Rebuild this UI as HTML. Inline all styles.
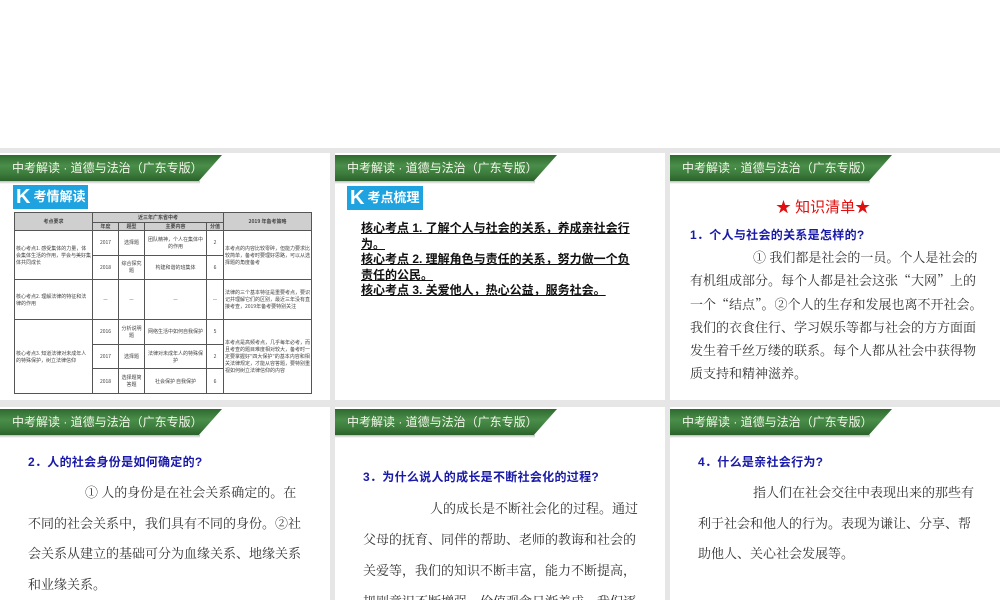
<!DOCTYPE html>
<html><head><meta charset="utf-8"><style>
*{margin:0;padding:0;box-sizing:border-box}
body{width:1000px;height:600px;position:relative;overflow:hidden;background:#fff;font-family:"Liberation Serif","Noto Serif CJK SC",serif}
.bg{position:absolute;left:0;top:148px;width:1000px;height:452px;background:#e6e6e6}
.s{position:absolute;background:#fff;overflow:hidden}
.hd{position:absolute;left:0;top:2px;width:222px;height:27px;background:linear-gradient(#2f6a2f,#4a8e4a 40%,#3b7b3b 70%,#2a5e2a);clip-path:polygon(0 0,222px 0,198px 27px,0 27px);color:#f2f6e8;font:12px "Liberation Sans","Noto Sans CJK SC",sans-serif;line-height:27px;padding-left:12px;letter-spacing:0}
.sh{position:absolute;left:0;top:28px;width:200px;height:3px;background:linear-gradient(#bbb,#fff)}
.q{position:absolute;color:#1a1aa8;font:bold 12px "Liberation Sans","Noto Sans CJK SC",sans-serif;letter-spacing:0.3px;white-space:nowrap}
.t{position:absolute;color:#333;font-size:13px;letter-spacing:0;white-space:nowrap}
.k{position:absolute;background:#1fa3e0;color:#fff;font:bold 13px "Liberation Sans","Noto Sans CJK SC",sans-serif;height:24px;line-height:24px;padding:0 3px;white-space:nowrap}
.k b{font-size:20px;vertical-align:-2px;margin-right:3px}
table{position:absolute;border-collapse:collapse;font-size:5px;color:#444;font-family:"Noto Sans CJK SC",sans-serif}
td{border:1px solid #555;text-align:center;padding:1px}
th{border:1px solid #555;background:#cfcfcf;font-weight:bold;font-size:5px}
.u{position:absolute;color:#111;font:bold 12px "Liberation Sans","Noto Sans CJK SC",sans-serif;line-height:15.5px;text-decoration:underline}
</style></head><body>
<div class="bg"></div>

<div class="s" style="left:0;top:153px;width:330px;height:247px">
<div class="hd">中考解读 · 道德与法治（广东专版）</div><div class="sh"></div>
<div class="k" style="left:13px;top:32px;width:75px"><b>K</b>考情解读</div>
<table style="left:14px;top:59px;width:298px;height:182px">
<tr style="height:10px"><th rowspan="2" style="width:78px">考点要求</th><th colspan="4">近三年广东省中考</th><th rowspan="2">2019 年备考策略</th></tr>
<tr style="height:8px"><th style="width:26px">年度</th><th style="width:26px">题型</th><th style="width:62px">主要内容</th><th style="width:17px">分值</th></tr>
<tr><td rowspan="2" style="text-align:left">核心考点1. 感受集体的力量，体会集体生活的作用，学会与美好集体共同成长</td><td>2017</td><td>选择题</td><td>团队精神，个人在集体中的作用</td><td>2</td><td rowspan="2" style="text-align:left">本考点的内容比较零碎，但能力要求比较简单，备考时要理好思路，可以从选择题的角度备考</td></tr>
<tr><td>2018</td><td>综合探究题</td><td>构建和谐的班集体</td><td>6</td></tr>
<tr style="height:40px"><td style="text-align:left">核心考点2. 理解法律的特征和法律的作用</td><td>—</td><td>—</td><td>—</td><td>—</td><td style="text-align:left">法律的三个基本特征是重要考点，要识记并理解它们的区别，最近三年没有直接考查，2019年备考要特别关注</td></tr>
<tr><td rowspan="3" style="text-align:left">核心考点3. 知道法律对未成年人的特殊保护，树立法律信仰</td><td>2016</td><td>分析说明题</td><td>网络生活中如何自我保护</td><td>5</td><td rowspan="3" style="text-align:left">本考点是高频考点，几乎每年必考，而且考查的题目难度相对较大，备考时一定要掌握好"四大保护"的基本内容和相关法律规定，才能从容答题，要特别重视如何树立法律信仰的内容</td></tr>
<tr><td>2017</td><td>选择题</td><td>法律对未成年人的特殊保护</td><td>2</td></tr>
<tr><td>2018</td><td>选择题简答题</td><td>社会保护 自我保护</td><td>6</td></tr>
</table>
</div>

<div class="s" style="left:335px;top:153px;width:330px;height:247px">
<div class="hd">中考解读 · 道德与法治（广东专版）</div><div class="sh"></div>
<div class="k" style="left:12px;top:33px;width:76px"><b>K</b>考点梳理</div>
<div class="u" style="left:26px;top:68px;width:274px">核心考点 1. 了解个人与社会的关系，养成亲社会行为。<br>核心考点 2. 理解角色与责任的关系，努力做一个负责任的公民。<br>核心考点 3. 关爱他人，热心公益，服务社会。</div>
</div>

<div class="s" style="left:670px;top:153px;width:330px;height:247px">
<div class="hd">中考解读 · 道德与法治（广东专版）</div><div class="sh"></div>
<div style="position:absolute;left:106px;top:43px;color:#e01010;font:15px 'Liberation Sans','Noto Sans CJK SC',sans-serif">★ 知识清单★</div>
<div class="q" style="left:20px;top:73px">1．个人与社会的关系是怎样的?</div>
<div class="t" style="left:20px;top:92px;line-height:23.3px;font-family:'Noto Serif CJK SC',serif"><span style="padding-left:63px"></span>① 我们都是社会的一员。个人是社会的<br>有机组成部分。每个人都是社会这张“大网”上的<br>一个“结点”。②个人的生存和发展也离不开社会。<br>我们的衣食住行、学习娱乐等都与社会的方方面面<br>发生着千丝万缕的联系。每个人都从社会中获得物<br>质支持和精神滋养。</div>
</div>

<div class="s" style="left:0;top:407px;width:330px;height:193px">
<div class="hd">中考解读 · 道德与法治（广东专版）</div><div class="sh"></div>
<div class="q" style="left:28px;top:46px">2．人的社会身份是如何确定的?</div>
<div class="t" style="left:28px;top:71px;line-height:30.5px"><span style="padding-left:57px"></span>① 人的身份是在社会关系确定的。在<br>不同的社会关系中，我们具有不同的身份。②社<br>会关系从建立的基础可分为血缘关系、地缘关系<br>和业缘关系。</div>
</div>

<div class="s" style="left:335px;top:407px;width:330px;height:193px">
<div class="hd">中考解读 · 道德与法治（广东专版）</div><div class="sh"></div>
<div class="q" style="left:28px;top:61px">3．为什么说人的成长是不断社会化的过程?</div>
<div class="t" style="left:28px;top:86px;line-height:31px"><span style="padding-left:67px"></span>人的成长是不断社会化的过程。通过<br>父母的抚育、同伴的帮助、老师的教诲和社会的<br>关爱等，我们的知识不断丰富，能力不断提高，<br>规则意识不断增强，价值观念日渐养成，我们逐</div>
</div>

<div class="s" style="left:670px;top:407px;width:330px;height:193px">
<div class="hd">中考解读 · 道德与法治（广东专版）</div><div class="sh"></div>
<div class="q" style="left:28px;top:46px">4．什么是亲社会行为?</div>
<div class="t" style="left:28px;top:71px;line-height:30.5px"><span style="padding-left:55px"></span>指人们在社会交往中表现出来的那些有<br>利于社会和他人的行为。表现为谦让、分享、帮<br>助他人、关心社会发展等。</div>
</div>
</body></html>
